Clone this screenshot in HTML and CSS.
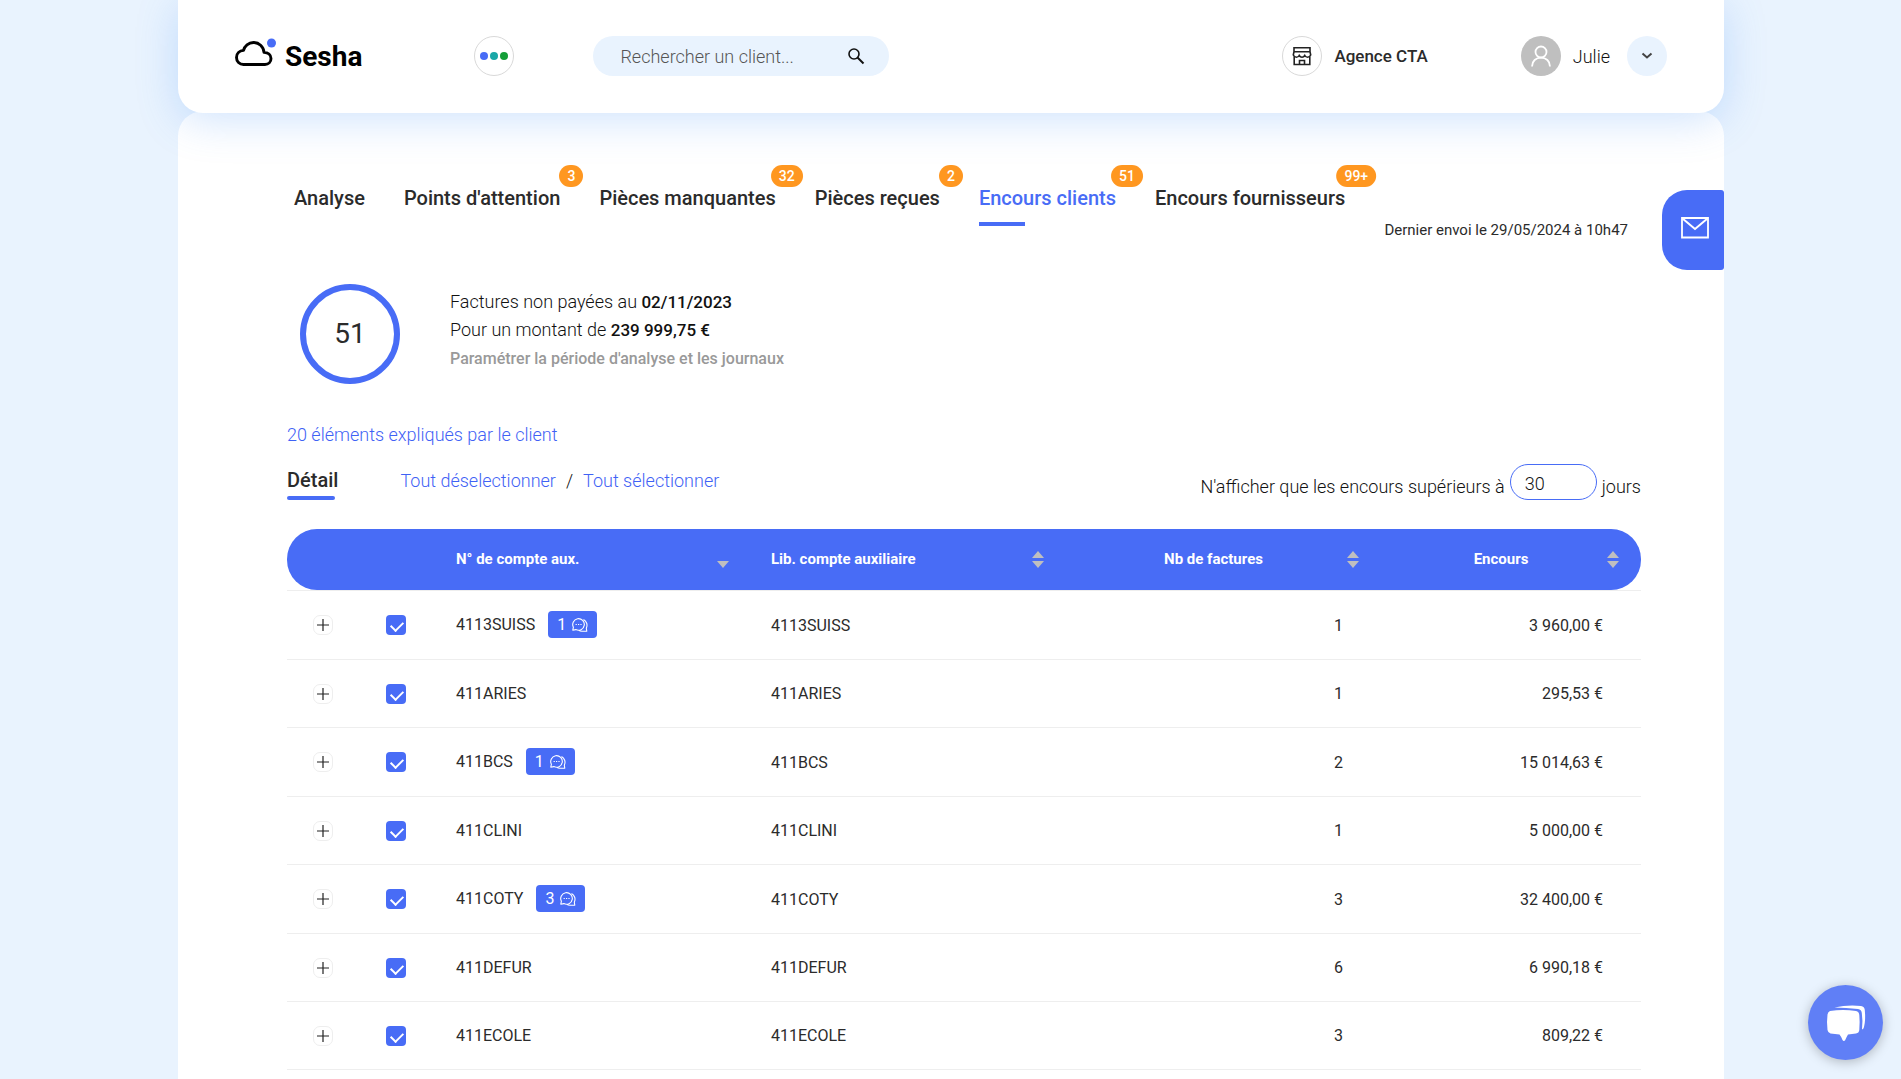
FILE: index.html
```
<!DOCTYPE html>
<html lang="fr">
<head>
    <meta charset="UTF-8">
    <meta name="viewport" content="width=device-width, initial-scale=1.0">
    <title>Sesha - Encours clients</title>
    <link rel="stylesheet" href="styles.css">
</head>
<body>
    <!-- symboles réutilisés -->
    <svg class="sprite" width="0" height="0">
        <symbol id="plus" viewBox="0 0 18 18">
            <path d="M9 3v12M3 9h12" fill="none" stroke="#222" stroke-width="1.2"/>
        </symbol>
        <symbol id="bubbles" viewBox="0 0 16 14">
            <path d="M1.400 9.200A5.800 5.800 0 1 1 3.800 11.600L.8 12.200ZM11.500 1.500A6.500 6.500 0 0 1 14.300 10.200L14.800 13.300H9.800Q8 13.200 7 12.300" fill="none" stroke="#fff" stroke-width="1.100" stroke-linejoin="round"/>
            <path d="M3.600 6.500h1.200M6 6.500h1.200M8.400 6.500h1.200" stroke="#fff" stroke-width="1.200"/>
        </symbol>
    </svg>

    <div class="page">
        <header class="header">
            <a class="logo" href="#">
                <svg class="logo-icon" width="42" height="30" viewBox="0 0 42 30">
                    <path d="M8.500 26.500C4.500 26.500 1.500 23.500 1.500 19.500C1.500 15.500 4.500 12.700 8.500 12.400C9.500 8 13.500 4.500 18.500 4.500C24 4.500 28.500 8.500 29 14.300C33 14.500 36 17 36 20.500C36 24 33.500 26.500 30 26.500Z" fill="none" stroke="#000" stroke-width="2.900" stroke-linejoin="round"/>
                    <circle cx="36.500" cy="5" r="4.500" fill="#486cf6"/>
                </svg>
                <span class="logo-text">Sesha</span>
            </a>

            <button class="round-btn apps-btn" type="button" aria-label="Applications">
                <svg width="28" height="8" viewBox="0 0 28 8">
                    <circle cx="4" cy="4" r="4" fill="#486cf6"/>
                    <circle cx="14" cy="4" r="4" fill="#1aa7a7"/>
                    <circle cx="24" cy="4" r="4" fill="#149e38"/>
                </svg>
            </button>

            <form class="search">
                <input class="search-input" type="text" placeholder="Rechercher un client..." aria-label="Rechercher un client">
                <button class="search-btn" type="button" aria-label="Rechercher">
                    <svg width="18" height="18" viewBox="0 0 18 18">
                        <circle cx="7" cy="7" r="5" fill="none" stroke="#111" stroke-width="1.600"/>
                        <path d="M10.500 10.500L16.500 16.500" stroke="#111" stroke-width="2"/>
                    </svg>
                </button>
            </form>

            <div class="agency">
                <button class="round-btn" type="button" aria-label="Agence">
                    <svg width="20" height="20" viewBox="0 0 20 20" fill="none" stroke="#222" stroke-width="1.600">
                        <path d="M2 1.700h16v4H2zM2 5.700L1.300 9q1 2.200 3 2.200T7.200 9.500q1 1.700 2.800 1.700t2.800-1.700q.9 1.700 2.900 1.700t3-2.200L18 5.700"/>
                        <path d="M2.200 10.500v8h15.600v-8M7.500 18.500v-4h5v4"/>
                    </svg>
                </button>
                <span class="agency-name">Agence CTA</span>
            </div>

            <div class="user">
                <span class="avatar">
                    <svg width="22" height="22" viewBox="0 0 22 22" fill="none" stroke="#fff" stroke-width="1.800">
                        <circle cx="11" cy="7" r="5.500"/>
                        <path d="M2 21.500C2 16 6 12.600 11 12.600S20 16 20 21.500"/>
                    </svg>
                </span>
                <span class="user-name">Julie</span>
                <button class="user-btn" type="button" aria-label="Menu utilisateur">
                    <svg width="12" height="8" viewBox="0 0 12 8">
                        <path d="M1.500 1.500L6 5.500L10.500 1.500" fill="none" stroke="#444" stroke-width="2"/>
                    </svg>
                </button>
            </div>
        </header>

        <main class="card">
            <nav class="tabs">
                <a class="tab" href="#">Analyse</a>
                <a class="tab" href="#">Points d'attention<span class="tab-badge">3</span></a>
                <a class="tab" href="#">Pièces manquantes<span class="tab-badge">32</span></a>
                <a class="tab" href="#">Pièces reçues<span class="tab-badge">2</span></a>
                <a class="tab active" href="#">Encours clients<span class="tab-badge">51</span></a>
                <a class="tab" href="#">Encours fournisseurs<span class="tab-badge">99+</span></a>
            </nav>
            <p class="last-sent">Dernier envoi le 29/05/2024 à 10h47</p>

            <button class="mail-btn" type="button" aria-label="Envoyer un mail">
                <svg width="28" height="22" viewBox="0 0 28 22" fill="none" stroke="#fff">
                    <path d="M1 1h26v19.500H1z" stroke-width="1.800"/>
                    <path d="M1.500 1.500L14 12L26.500 1.500" stroke-width="2"/>
                </svg>
            </button>

            <section class="summary">
                <div class="summary-count">51</div>
                <div class="summary-text">
                    <p>Factures non payées au <b>02/11/2023</b></p>
                    <p>Pour un montant de <b>239 999,75 €</b></p>
                    <a class="summary-settings" href="#">Paramétrer la période d'analyse et les journaux</a>
                </div>
            </section>

            <a class="explained" href="#">20 éléments expliqués par le client</a>

            <div class="toolbar">
                <h2 class="toolbar-title">Détail</h2>
                <div class="toolbar-links">
                    <a href="#">Tout déselectionner</a>
                    <span>/</span>
                    <a href="#">Tout sélectionner</a>
                </div>
                <div class="days">
                    <label for="days">N'afficher que les encours supérieurs à</label>
                    <input class="days-input" type="text" id="days" value="30">
                    <span>jours</span>
                </div>
            </div>

            <table class="table">
                <colgroup>
                    <col class="col-expand">
                    <col class="col-check">
                    <col>
                    <col>
                    <col>
                    <col class="col-amount">
                </colgroup>
                <thead>
                    <tr>
                        <th></th>
                        <th></th>
                        <th>N° de compte aux.<span class="sort sorted"></span></th>
                        <th>Lib. compte auxiliaire<span class="sort"></span></th>
                        <th class="center">Nb de factures<span class="sort"></span></th>
                        <th class="center">Encours<span class="sort"></span></th>
                    </tr>
                </thead>
                <tbody>
                    <tr>
                        <td class="icon-cell"><button class="expand" type="button" aria-label="Déplier"><svg width="18" height="18"><use href="#plus"/></svg></button></td>
                        <td class="icon-cell"><input class="check" type="checkbox" aria-label="4113SUISS" checked></td>
                        <td><div class="account">4113SUISS<button class="comments" type="button">1<svg width="16" height="14"><use href="#bubbles"/></svg></button></div></td>
                        <td>4113SUISS</td>
                        <td class="num">1</td>
                        <td class="num">3 960,00 €</td>
                    </tr>
                    <tr>
                        <td class="icon-cell"><button class="expand" type="button" aria-label="Déplier"><svg width="18" height="18"><use href="#plus"/></svg></button></td>
                        <td class="icon-cell"><input class="check" type="checkbox" aria-label="411ARIES" checked></td>
                        <td>411ARIES</td>
                        <td>411ARIES</td>
                        <td class="num">1</td>
                        <td class="num">295,53 €</td>
                    </tr>
                    <tr>
                        <td class="icon-cell"><button class="expand" type="button" aria-label="Déplier"><svg width="18" height="18"><use href="#plus"/></svg></button></td>
                        <td class="icon-cell"><input class="check" type="checkbox" aria-label="411BCS" checked></td>
                        <td><div class="account">411BCS<button class="comments" type="button">1<svg width="16" height="14"><use href="#bubbles"/></svg></button></div></td>
                        <td>411BCS</td>
                        <td class="num">2</td>
                        <td class="num">15 014,63 €</td>
                    </tr>
                    <tr>
                        <td class="icon-cell"><button class="expand" type="button" aria-label="Déplier"><svg width="18" height="18"><use href="#plus"/></svg></button></td>
                        <td class="icon-cell"><input class="check" type="checkbox" aria-label="411CLINI" checked></td>
                        <td>411CLINI</td>
                        <td>411CLINI</td>
                        <td class="num">1</td>
                        <td class="num">5 000,00 €</td>
                    </tr>
                    <tr>
                        <td class="icon-cell"><button class="expand" type="button" aria-label="Déplier"><svg width="18" height="18"><use href="#plus"/></svg></button></td>
                        <td class="icon-cell"><input class="check" type="checkbox" aria-label="411COTY" checked></td>
                        <td><div class="account">411COTY<button class="comments" type="button">3<svg width="16" height="14"><use href="#bubbles"/></svg></button></div></td>
                        <td>411COTY</td>
                        <td class="num">3</td>
                        <td class="num">32 400,00 €</td>
                    </tr>
                    <tr>
                        <td class="icon-cell"><button class="expand" type="button" aria-label="Déplier"><svg width="18" height="18"><use href="#plus"/></svg></button></td>
                        <td class="icon-cell"><input class="check" type="checkbox" aria-label="411DEFUR" checked></td>
                        <td>411DEFUR</td>
                        <td>411DEFUR</td>
                        <td class="num">6</td>
                        <td class="num">6 990,18 €</td>
                    </tr>
                    <tr>
                        <td class="icon-cell"><button class="expand" type="button" aria-label="Déplier"><svg width="18" height="18"><use href="#plus"/></svg></button></td>
                        <td class="icon-cell"><input class="check" type="checkbox" aria-label="411ECOLE" checked></td>
                        <td>411ECOLE</td>
                        <td>411ECOLE</td>
                        <td class="num">3</td>
                        <td class="num">809,22 €</td>
                    </tr>
                </tbody>
            </table>
        </main>
    </div>

    <button class="chat-btn" type="button" aria-label="Ouvrir le chat">
        <svg width="40" height="38" viewBox="0 0 40 38" fill="#fff">
            <path d="M4 7Q17 5 30 7Q33 7.500 33.300 11Q34 18 33.300 26Q33 29 30 29.500L22 30.500Q20.500 33 19 36.500Q17.500 37.500 16.500 36Q15.500 33 13.500 30.500L4.500 29.500Q2 29 1.500 26Q.5 18 1.500 10.500Q2 7.500 4 7Z"/>
            <path d="M8.500 3.500Q22 .5 35 2Q38.500 2.500 38.800 6Q39.800 16 38 23Q37.500 25 36 25.500Q37 17 35.800 9Q35.500 5.500 32 5Q20 3.500 8.500 3.500Z"/>
        </svg>
    </button>
</body>
</html>
```
FILE: styles.css
```
* {
    margin: 0;
    padding: 0;
    box-sizing: border-box;
}

body {
    background: #e9f3fe;
    font-family: Roboto, "Liberation Sans", sans-serif;
    font-size: 18px;
    font-weight: 300;
    color: #111;
}

a {
    color: #3f62f5;
    text-decoration: none;
}

button,
input {
    font-family: inherit;
    font-weight: inherit;
}

button {
    border: none;
    background: none;
    cursor: pointer;
}

svg {
    display: block;
}

.sprite {
    position: absolute;
}

.page {
    min-height: 100vh;
    padding: 0 177px 0 178px;
    display: flex;
    flex-direction: column;
}

/* En-tête */
.header {
    position: relative;
    z-index: 1;
    height: 113px;
    padding: 0 57px 1px;
    display: flex;
    align-items: center;
    background: #fff;
    border-radius: 0 0 25px 25px;
    box-shadow: 0 8px 40px rgba(72, 146, 246, 0.25);
}

.logo {
    display: flex;
    align-items: center;
    gap: 8px;
    color: #000;
}

.logo-icon {
    margin-bottom: 6px;
}

.logo-text {
    font-size: 28px;
    font-weight: 700;
}

.round-btn {
    width: 40px;
    height: 40px;
    display: flex;
    align-items: center;
    justify-content: center;
    border: 1px solid #d9d9d9;
    border-radius: 50%;
    background: #fff;
}

.apps-btn {
    margin-left: 112px;
}

.search {
    width: 296px;
    height: 40px;
    margin-left: 79px;
    padding: 0 24px 0 27px;
    display: flex;
    align-items: center;
    background: #e9f3fe;
    border-radius: 20px;
}

.search-input {
    flex: 1;
    min-width: 0;
    border: none;
    outline: none;
    background: none;
    font-size: 18px;
}

.search-input::placeholder {
    color: #555;
}

.agency {
    margin-left: auto;
    display: flex;
    align-items: center;
    gap: 12px;
}

.agency-name {
    font-size: 17px;
    font-weight: 500;
    color: #2b2b2b;
}

.user {
    margin-left: 93px;
    display: flex;
    align-items: center;
}

.avatar {
    width: 40px;
    height: 40px;
    display: flex;
    align-items: center;
    justify-content: center;
    border-radius: 50%;
    background: #bfbfbf;
}

.user-name {
    margin: 0 17px 0 12px;
}

.user-btn {
    width: 40px;
    height: 40px;
    display: flex;
    align-items: center;
    justify-content: center;
    border-radius: 50%;
    background: #e9f3fe;
}

/* Contenu */
.card {
    position: relative;
    flex: 1;
    margin-top: -2px;
    padding: 75px 83px 8px 109px;
    background: #fff;
    border-radius: 25px 25px 0 0;
}

.tabs {
    display: flex;
    gap: 39px;
    padding-left: 7px;
}

.tab {
    position: relative;
    padding-bottom: 10px;
    font-size: 20px;
    line-height: 24px;
    font-weight: 500;
    color: #2b2b2b;
}

.tab.active {
    color: #486cf6;
}

.tab.active::after {
    content: "";
    display: block;
    position: absolute;
    bottom: -6px;
    left: 0;
    width: 46px;
    height: 4px;
    background: #486cf6;
}

.tab-badge {
    position: absolute;
    top: -21px;
    left: calc(100% + 11px);
    transform: translateX(-50%);
    padding: 0 8px;
    border-radius: 11px;
    background: #ff9720;
    color: #fff;
    font-size: 14px;
    line-height: 22px;
    font-weight: 500;
}

.last-sent {
    padding-right: 13px;
    font-size: 15px;
    font-weight: 400;
    line-height: 20px;
    text-align: right;
    color: #2b2b2b;
}

.mail-btn {
    position: absolute;
    top: 79px;
    right: 0;
    width: 62px;
    height: 80px;
    padding: 0 0 4px 4px;
    display: flex;
    align-items: center;
    justify-content: center;
    background: #486cf6;
    border-radius: 25px 3px 3px 25px;
}

.summary {
    margin-top: 44px;
    padding-left: 13px;
    display: flex;
    align-items: center;
    gap: 50px;
}

.summary-count {
    width: 100px;
    height: 100px;
    border: 6px solid #486cf6;
    border-radius: 50%;
    font-size: 28px;
    font-weight: 400;
    line-height: 88px;
    text-align: center;
    color: #2b2b2b;
}

.summary-text {
    padding-bottom: 8px;
    line-height: 27px;
}

.summary-text b {
    font-size: 17px;
    font-weight: 500;
}

.summary-settings {
    font-size: 16px;
    font-weight: 500;
    color: #999;
}

.explained {
    display: block;
    margin-top: 40px;
    line-height: 22px;
}

.toolbar {
    margin-top: 18px;
    display: flex;
    align-items: flex-start;
}

.toolbar-title {
    padding-top: 4px;
    font-size: 20px;
    line-height: 24px;
    font-weight: 500;
    color: #2b2b2b;
}

.toolbar-title::after {
    content: "";
    display: block;
    width: 48px;
    height: 4px;
    margin-top: 4px;
    border-radius: 2px;
    background: #486cf6;
}

.toolbar-links {
    margin-left: 62px;
    padding-top: 6px;
    display: flex;
    gap: 10px;
    line-height: 22px;
}

.days {
    margin-left: auto;
    display: flex;
    align-items: flex-end;
    gap: 5px;
    line-height: 26px;
}

.days-input {
    width: 87px;
    height: 36px;
    padding: 2px 14px 0;
    border: 1px solid #486cf6;
    border-radius: 18px;
    outline: none;
    font-size: 18px;
    color: #111;
}

/* Tableau */
.table {
    width: 100%;
    margin-top: 29px;
    table-layout: fixed;
    border-collapse: separate;
    border-spacing: 0;
    font-size: 16px;
    font-weight: 400;
    color: #2b2b2b;
}

.col-expand {
    width: 72px;
}

.col-check {
    width: 77px;
}

.col-amount {
    width: 260px;
}

.table th {
    position: relative;
    height: 61px;
    padding: 0 40px 1px 20px;
    background: #486cf6;
    color: #fff;
    font-size: 15px;
    font-weight: 700;
    text-align: left;
}

.table th:first-child {
    border-radius: 30px 0 0 30px;
}

.table th:last-child {
    border-radius: 0 30px 30px 0;
}

.table th.center {
    text-align: center;
}

.sort {
    position: absolute;
    top: 22px;
    right: 22px;
    width: 12px;
    height: 17px;
}

.sort::before,
.sort::after {
    content: "";
    position: absolute;
    left: 0;
    border: 0 solid transparent;
    border-width: 0 6px;
}

.sort::before {
    top: 0;
    border-bottom: 7px solid #bfbfbf;
}

.sort::after {
    bottom: 0;
    border-top: 7px solid #bfbfbf;
}

.sort.sorted::before {
    display: none;
}

.table td {
    height: 68px;
    padding: 20px 38px 20px 20px;
    border-bottom: 1px solid #eee;
    line-height: 27px;
}

.table tbody tr:first-child td {
    border-top: 1px solid #eee;
}

.table td.icon-cell {
    padding: 0;
}

.table td.num {
    text-align: right;
}

.account {
    padding-bottom: 1px;
    display: flex;
    align-items: center;
    gap: 13px;
}

.expand {
    display: block;
    margin: 0 auto;
    border: 1px solid #eee;
    border-radius: 7px;
}

.check {
    appearance: none;
    display: block;
    position: relative;
    width: 20px;
    height: 20px;
    margin: 0 0 0 27px;
    border-radius: 4px;
    background: #486cf6;
}

.check:checked::after {
    content: "";
    position: absolute;
    top: 4px;
    left: 7px;
    width: 6px;
    height: 10px;
    border: solid #fff;
    border-width: 0 2px 2px 0;
    transform: rotate(45deg);
}

.comments {
    height: 27px;
    padding: 0 9px;
    display: flex;
    align-items: center;
    gap: 6px;
    border-radius: 4px;
    background: #486cf6;
    color: #fff;
    font-size: 16px;
}

.chat-btn {
    position: fixed;
    right: 18px;
    bottom: 19px;
    width: 75px;
    height: 75px;
    display: flex;
    align-items: center;
    justify-content: center;
    border-radius: 50%;
    background: #607ff6;
    box-shadow: 0 2px 12px rgba(0, 0, 0, 0.25);
}
```
